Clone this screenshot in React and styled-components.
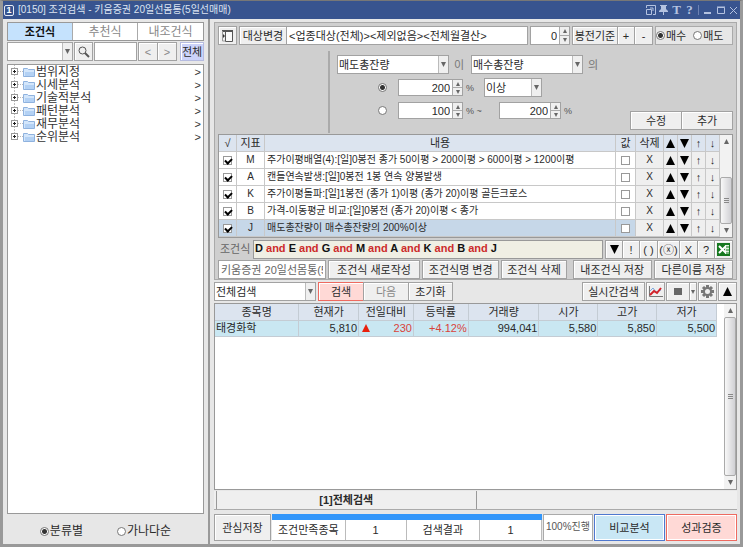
import React, { useState } from 'react'
import styled, { createGlobalStyle } from 'styled-components'

const conditions = [
  { key: 'M', text: '주가이평배열(4):[일]0봉전 종가 50이평 > 200이평 > 600이평 > 1200이평' },
  { key: 'A', text: '캔들연속발생:[일]0봉전 1봉 연속 양봉발생' },
  { key: 'K', text: '주가이평돌파:[일]1봉전 (종가 1)이평 (종가 20)이평 골든크로스' },
  { key: 'B', text: '가격-이동평균 비교:[일]0봉전 (종가 20)이평 < 종가' },
  { key: 'J', text: '매도총잔량이 매수총잔량의 200%이상' },
]
const folders = ['범위지정', '시세분석', '기술적분석', '패턴분석', '재무분석', '순위분석']
const formula = ['D', 'E', 'G', 'M', 'A', 'K', 'B', 'J']
const resultHeads = ['종목명', '현재가', '전일대비', '등락률', '거래량', '시가', '고가', '저가']
const resultWidths = [84, 60, 55, 55, 71, 59, 59, 60]

function Combo({ label, value, width }) {
  return (
    <ComboBox $width={width}>
      <select aria-label={label} defaultValue={value}>
        <option value={value}>{value}</option>
      </select>
      <ArrowCell><Tri down /></ArrowCell>
    </ComboBox>
  )
}

function Tri({ down, size = 5, color = '#666' }) {
  return (
    <svg width={size} height={size} viewBox="0 0 10 10">
      <path d={down ? 'M0 0H10L5 10Z' : 'M0 10H10L5 0Z'} fill={color} />
    </svg>
  )
}

function Spin({ label, value, width }) {
  return (
    <SpinBox $width={width}>
      <input aria-label={label} defaultValue={value} />
      <div>
        <button aria-label={label + ' 증가'}><Tri size={4} /></button>
        <button aria-label={label + ' 감소'}><Tri size={4} down /></button>
      </div>
    </SpinBox>
  )
}

function Scroll({ top, size, fill }) {
  return (
    <ScrollBar>
      <button aria-label="위로"><Tri size={5} /></button>
      <ScrollTrack $top={top}>
        <ScrollThumb $size={size} $fill={fill}><i /><i /><i /></ScrollThumb>
      </ScrollTrack>
      <button aria-label="아래로"><Tri size={5} down /></button>
    </ScrollBar>
  )
}

function Folder() {
  return (
    <svg width="12" height="10" viewBox="0 0 12 10">
      <path d="M.5 1.5H4.5L5.5 2.5H11.5V9.5H.5Z" fill="#d3e6fb" stroke="#8fb2de" />
      <path d="M2 5H11V9H2Z" fill="#b3d1f4" />
    </svg>
  )
}

function TitleBar() {
  return (
    <Title>
      <Num>1</Num>
      <h1>[0150] 조건검색 - 키움증권 20일선몸통(5일선매매)</h1>
      <TitleTools>
        <button aria-label="창 분리">
          <svg width="10" height="10" viewBox="0 0 10 10" fill="none" stroke="currentColor"><path d="M.5 3V.5H9.5V9.5H7M.5 4.5H5.5V9.5H.5ZM4 3H7V6" /></svg>
        </button>
        <button aria-label="고정">
          <svg width="9" height="10" viewBox="0 0 9 10" fill="currentColor"><path d="M1 0H8V1H7V4L9 6V7H5V10H4V7H0V6L2 4V1H1Z" /></svg>
        </button>
        <button aria-label="글꼴">T</button>
        <button aria-label="도움말">?</button>
        <Bar />
        <button aria-label="최소화">
          <svg width="9" height="10" viewBox="0 0 9 10" fill="currentColor"><path d="M1 7H8V9H1Z" /></svg>
        </button>
        <button aria-label="최대화">
          <svg width="9" height="10" viewBox="0 0 9 10" fill="none" stroke="currentColor"><path d="M1.5 2.5H8.5V8.5H1.5ZM1 2H9" /></svg>
        </button>
        <button aria-label="닫기">
          <svg width="9" height="10" viewBox="0 0 9 10" fill="none" stroke="currentColor"><path d="M1 2L8 9M8 2L1 9" /></svg>
        </button>
      </TitleTools>
    </Title>
  )
}

function Sidebar() {
  const [tab, setTab] = useState(0)
  return (
    <Side>
      <SideTabs>
        {['조건식', '추천식', '내조건식'].map((t, i) => (
          <SideTab key={t} $on={tab === i} onClick={() => setTab(i)}>{t}</SideTab>
        ))}
      </SideTabs>
      <SideTools>
        <Combo label="분류" value="" width={66} />
        <Btn $w={19} aria-label="찾기">
          <svg width="12" height="12" viewBox="0 0 12 12" fill="none" stroke="#555"><circle cx="4.5" cy="4.5" r="3.5" /><path d="M7 7L11 11" strokeWidth="2" /></svg>
        </Btn>
        <TextBox aria-label="검색어" $w={43} />
        <Joined>
          <Btn $w={20} $muted>&lt;</Btn>
          <Btn $w={20} $muted>&gt;</Btn>
        </Joined>
        <AllBtn>전체</AllBtn>
      </SideTools>
      <Tree>
        {folders.map((f, i) => (
          <li key={f}>
            <svg width="13" height="13" viewBox="0 0 13 13" fill="none">
              <path d={i === folders.length - 1 ? 'M4.5 0V6M8 6.5H13' : 'M4.5 0V13M8 6.5H13'} stroke="#bbb" strokeDasharray="1 1" />
              <rect x="1.5" y="3.5" width="6" height="6" fill="#fff" stroke="#999" />
              <path d="M3 6.5H6M4.5 5V8" stroke="#222" />
            </svg>
            <Folder />
            <span>{f}</span>
            <b>&gt;</b>
          </li>
        ))}
      </Tree>
      <SortRow>
        <Choice $big><input type="radio" name="sort" defaultChecked />분류별</Choice>
        <Choice $big><input type="radio" name="sort" />가나다순</Choice>
      </SortRow>
    </Side>
  )
}

function ConditionEditor() {
  return (
    <Group>
      <Row>
        <Btn $w={19} aria-label="패널 접기">
          <svg width="13" height="12" viewBox="0 0 13 12" fill="none" stroke="#555">
            <path d="M4.5 1.5H11.5V11.5H4.5Z" fill="#fafafa" />
            <path d="M1 1H12" strokeWidth="2" />
            <path d="M1 3L4 6L1 9Z" fill="#333" stroke="none" />
            <path d="M1.5 1V11H4" stroke="#999" />
          </svg>
        </Btn>
        <Joined $grow>
          <Btn $w={48}>대상변경</Btn>
          <TextBox aria-label="대상" $grow defaultValue="<업종대상(전체)><제외없음><전체월결산>" />
        </Joined>
        <Spin label="봉전" value="0" width={40} />
        <Joined>
          <Btn $w={46}>봉전기준</Btn>
          <Btn $w={18}>+</Btn>
          <Btn $w={19}>-</Btn>
        </Joined>
        <SideChoice>
          <Choice><input type="radio" name="side" defaultChecked />매수</Choice>
          <Choice><input type="radio" name="side" />매도</Choice>
        </SideChoice>
      </Row>
      <Detail>
        <Fields>
          <Line>
            <Combo label="왼쪽 항목" value="매도총잔량" width={112} />
            <Word>이</Word>
            <Combo label="오른쪽 항목" value="매수총잔량" width={112} />
            <Word>의</Word>
          </Line>
          <Line $indent>
            <Pick type="radio" name="range" aria-label="단일 비율" defaultChecked />
            <Spin label="비율" value="200" width={65} />
            <Percent>%</Percent>
            <Combo label="비교" value="이상" width={58} />
          </Line>
          <Line $indent>
            <Pick type="radio" name="range" aria-label="비율 범위" />
            <Spin label="최소 비율" value="100" width={65} />
            <Percent $wide>% ~</Percent>
            <Spin label="최대 비율" value="200" width={62} />
            <Percent>%</Percent>
          </Line>
        </Fields>
        <EditButtons>
          <Btn $w={52}>수정</Btn>
          <Btn $w={52}>추가</Btn>
        </EditButtons>
      </Detail>
      <ListFrame>
        <CondTable>
          <colgroup>
            <col width="18" /><col width="28" /><col /><col width="20" /><col width="28" />
            <col width="14" /><col width="14" /><col width="14" /><col width="14" />
          </colgroup>
          <thead>
            <tr>
              <th>√</th><th>지표</th><th>내용</th><th>값</th><th>삭제</th>
              <th><Tri size={9} color="#000" /></th><th><Tri size={9} color="#000" down /></th><th>↑</th><th>↓</th>
            </tr>
          </thead>
          <tbody>
            {conditions.map((c, i) => (
              <CondRow key={c.key} $on={i === 4}>
                <td><Check type="checkbox" aria-label={c.key + ' 사용'} defaultChecked /></td>
                <td>{c.key}</td>
                <td>{c.text}</td>
                <td><Check type="checkbox" aria-label={c.key + ' 값'} /></td>
                <td><button>X</button></td>
                <td><button aria-label="맨 위로"><Tri size={9} color="#000" /></button></td>
                <td><button aria-label="맨 아래로"><Tri size={9} color="#000" down /></button></td>
                <td><button>↑</button></td>
                <td><button>↓</button></td>
              </CondRow>
            ))}
          </tbody>
        </CondTable>
        <Scroll top={29} size={47} />
      </ListFrame>
      <Row>
        <FormulaLabel>조건식</FormulaLabel>
        <Formula>
          {formula.map((f, i) => (
            <React.Fragment key={f}>{i > 0 && <em> and </em>}{f}</React.Fragment>
          ))}
        </Formula>
        <Joined>
          <Btn $w={18} aria-label="펼치기"><Tri size={9} color="#000" down /></Btn>
          <Btn $w={18}>!</Btn>
          <Btn $w={19}>( )</Btn>
          <Btn $w={23}>(ⓧ)</Btn>
          <Btn $w={19}>X</Btn>
          <Btn $w={18}>?</Btn>
          <Btn $w={19} aria-label="엑셀">
            <svg width="13" height="13" viewBox="0 0 13 13"><path d="M0 0H13V13H0Z" fill="#16781f" /><path d="M8 2H12V11H8Z" fill="#dcefdc" /><path d="M2 3L9 10M9 3L2 10" stroke="#fff" strokeWidth="2" /><path d="M9 4H12M9 7H12M9 10H12" stroke="#16781f" /></svg>
          </Btn>
        </Joined>
      </Row>
      <Row>
        <TextBox aria-label="조건식명" $w={108} $muted defaultValue="키움증권 20일선몸통(5일선매매)" />
        <Btn $grow={93}>조건식 새로작성</Btn>
        <Btn $grow={78}>조건식명 변경</Btn>
        <Btn $grow={66}>조건식 삭제</Btn>
        <Gap />
        <Btn $grow={80}>내조건식 저장</Btn>
        <Btn $grow={80}>다른이름 저장</Btn>
      </Row>
    </Group>
  )
}

function Results() {
  return (
    <>
      <Row>
        <Combo label="검색 범위" value="전체검색" width={102} />
        <Joined>
          <Btn $w={46} $red>검색</Btn>
          <Btn $w={46} $muted>다음</Btn>
          <Btn $w={45}>초기화</Btn>
        </Joined>
        <ResultTools>
          <Btn $w={63}>실시간검색</Btn>
          <Btn $w={19} aria-label="차트">
            <svg width="15" height="13" viewBox="0 0 15 13" fill="none"><path d="M1.5 1V11.5H15" stroke="#777" /><path d="M2 6L5 3L8 7L13 5" stroke="#7aa8df" /><path d="M2 10L6 6L9 8L13 3" stroke="#d3222a" strokeWidth="2" /></svg>
          </Btn>
          <Joined>
            <Btn $w={24} aria-label="정지"><Stop /></Btn>
            <Btn $w={8} aria-label="정지 메뉴"><Tri size={4} down /></Btn>
          </Joined>
          <Btn $w={19} aria-label="설정">
            <svg width="13" height="13" viewBox="0 0 13 13" fill="none" stroke="#777"><circle cx="6.5" cy="6.5" r="3.5" strokeWidth="2" /><path d="M6.5 0V3M6.5 10V13M0 6.5H3M10 6.5H13M2 2L4 4M9 9L11 11M11 2L9 4M4 9L2 11" strokeWidth="3" /></svg>
          </Btn>
          <Btn $w={19} aria-label="접기"><Tri size={9} color="#000" /></Btn>
        </ResultTools>
      </Row>
      <ResultFrame>
        <ResultArea>
          <ResultTable>
            <colgroup>
              {resultWidths.map((w, i) => <col key={i} style={{ width: `${w / 5.03}%` }} />)}
            </colgroup>
            <thead>
              <tr>{resultHeads.map((h) => <th key={h}>{h}</th>)}</tr>
            </thead>
            <tbody>
              <tr>
                <td>태경화학</td>
                <td>5,810</td>
                <td><Change><Tri size={8} color="#e8200c" />230</Change></td>
                <Up>+4.12%</Up>
                <td>994,041</td>
                <td>5,580</td>
                <td>5,850</td>
                <td>5,500</td>
              </tr>
            </tbody>
          </ResultTable>
        </ResultArea>
        <Scroll fill />
      </ResultFrame>
      <PageTabs>
        <button>[1]전체검색</button>
      </PageTabs>
      <Bottom>
        <Btn $w={57}>관심저장</Btn>
        <Status>
          <span>조건만족종목</span>
          <span>1</span>
          <span>검색결과</span>
          <span>1</span>
        </Status>
        <Progress>100%진행</Progress>
        <BigBtn>비교분석</BigBtn>
        <BigBtn $red>성과검증</BigBtn>
      </Bottom>
    </>
  )
}

export default function App() {
  return (
    <>
      <Global />
      <Window>
        <TitleBar />
        <Body>
          <Sidebar />
          <Main>
            <ConditionEditor />
            <Results />
          </Main>
        </Body>
      </Window>
    </>
  )
}

const Global = createGlobalStyle`
* {
  box-sizing: border-box;
}
body {
  margin: 0;
  background: #999;
}
body, button, input, select {
  font-family: "Liberation Sans", "Noto Sans CJK KR", sans-serif;
  font-size: 11px;
  line-height: 14px;
  color: #2a2a2a;
}
button, input, select {
  margin: 0;
  padding: 0;
  border: 0;
  border-radius: 0;
  background: none;
  outline: none;
}
svg {
  display: block;
  flex: none;
}
input[type=radio] {
  appearance: none;
  flex: none;
  width: 9px;
  height: 9px;
  border: 1px solid #777;
  border-radius: 50%;
  background: #fff;
  &:checked {
    background: radial-gradient(#333 0 2px, #fff 3px);
  }
}
`;

const Window = styled.div`
  display: flex;
  flex-direction: column;
  min-height: 100vh;
  border: 3px solid #999;
  border-top: 1px solid #777;
  background: #e7e7e7;
`;

const Title = styled.header`
  display: flex;
  align-items: center;
  gap: 4px;
  height: 18px;
  padding: 0 2px 0 1px;
  background: #38548f;
  h1 {
    flex: 1;
    margin: 0;
    font-size: 10px;
    font-weight: normal;
    color: #dde4f2;
    white-space: nowrap;
  }
`;

const Num = styled.span`
  width: 10px;
  border: 1px solid #e6ebf5;
  border-radius: 2px;
  font-size: 9px;
  line-height: 9px;
  font-weight: bold;
  text-align: center;
  color: #fff;
`;

const TitleTools = styled.div`
  display: flex;
  align-items: center;
  gap: 4px;
  button {
    display: flex;
    justify-content: center;
    width: 9px;
    color: #b4c2e0;
    font-family: "Liberation Serif", serif;
    font-size: 13px;
    font-weight: bold;
  }
`;

const Bar = styled.i`
  width: 1px;
  height: 10px;
  background: #6d82b3;
`;

const Body = styled.div`
  display: flex;
  flex: 1;
`;

const Side = styled.aside`
  display: flex;
  flex-direction: column;
  flex: none;
  width: 207px;
  padding: 3px 4px 0;
  border-right: 2px solid #999;
`;

const SideTabs = styled.div`
  display: grid;
  grid-template-columns: 1fr 1fr 1fr;
  height: 19px;
  border: 1px solid #999;
  background: #fff;
`;

const SideTab = styled.button`
  border-right: 1px solid #aaa;
  font-size: ${p => p.$on ? '11px' : '12px'};
  font-weight: ${p => p.$on ? 'bold' : 'normal'};
  color: ${p => p.$on ? '#111' : '#888'};
  background: ${p => p.$on ? '#c5e2fd' : '#fff'};
  &:last-child {
    border-right: 0;
  }
`;

const SideTools = styled.div`
  display: flex;
  gap: 1px;
  height: 19px;
  margin: 1px 0 3px;
`;

const Joined = styled.div`
  display: flex;
  flex: ${p => p.$grow ? '1' : 'none'};
  min-width: 0;
  > * + * {
    margin-left: -1px;
  }
`;

const Btn = styled.button`
  display: flex;
  align-items: center;
  justify-content: center;
  flex: ${p => p.$grow ? `${p.$grow} 1 ${p.$grow}px` : 'none'};
  width: ${p => p.$w ? p.$w + 'px' : 'auto'};
  min-height: 19px;
  border: 1px solid ${p => p.$red ? '#ee6a60' : '#a2a2a2'};
  box-shadow: inset 1px 1px 0 #fff;
  background: ${p => p.$red ? '#ffd9d6' : '#efefef'};
  color: ${p => p.$muted ? '#888' : '#2a2a2a'};
  white-space: nowrap;
`;

const AllBtn = styled(Btn)`
  flex: 1;
  margin-left: 2px;
  border-color: #b5bbe0;
  background: #ccd3fa;
`;

const TextBox = styled.input`
  flex: ${p => p.$grow ? '1' : 'none'};
  width: ${p => p.$w ? p.$w + 'px' : 'auto'};
  min-width: 0;
  padding: 0 2px;
  border: 1px solid #a2a2a2;
  background: #fff;
  color: ${p => p.$muted ? '#666' : '#2a2a2a'};
`;

const ComboBox = styled.div`
  display: flex;
  flex: none;
  width: ${p => p.$width}px;
  height: 19px;
  border: 1px solid #a2a2a2;
  background: #fff;
  select {
    appearance: none;
    flex: 1;
    min-width: 0;
    padding-left: 1px;
  }
`;

const ArrowCell = styled.span`
  display: flex;
  align-items: center;
  justify-content: center;
  width: 10px;
  border-left: 1px solid #bbb;
  background: #efefef;
  pointer-events: none;
`;

const SpinBox = styled.div`
  display: flex;
  flex: none;
  width: ${p => p.$width}px;
  height: 17px;
  border: 1px solid #a2a2a2;
  background: #fff;
  input {
    flex: 1;
    min-width: 0;
    padding-right: 2px;
    text-align: right;
  }
  div {
    display: flex;
    flex-direction: column;
    width: 10px;
    border-left: 1px solid #aaa;
  }
  button {
    display: flex;
    align-items: center;
    justify-content: center;
    flex: 1;
    background: #efefef;
  }
  button + button {
    border-top: 1px solid #aaa;
  }
`;

const Tree = styled.ul`
  flex: 1;
  margin: 0;
  padding: 0 2px;
  border: 1px solid #999;
  background: #fff;
  list-style: none;
  font-size: 12px;
  li {
    display: flex;
    align-items: center;
    height: 13px;
    color: #333;
  }
  span {
    flex: 1;
    padding-left: 1px;
  }
  b {
    font-weight: normal;
    font-size: 11px;
  }
`;

const SortRow = styled.div`
  display: flex;
  justify-content: center;
  gap: 34px;
  padding: 10px 0 6px;
`;

const Choice = styled.label`
  display: flex;
  align-items: center;
  gap: 1px;
  font-size: ${p => p.$big ? '12px' : '11px'};
  white-space: nowrap;
`;

const Main = styled.main`
  display: flex;
  flex-direction: column;
  flex: 1;
  min-width: 0;
  gap: 2px;
  padding: 3px 3px 3px 4px;
`;

const Group = styled.section`
  display: flex;
  flex-direction: column;
  gap: 1px;
  padding: 3px 3px 0;
  border: 1px solid #aaa;
  background: #cfcfcf;
`;

const Row = styled.div`
  display: flex;
  gap: 2px;
  height: 19px;
  > ${SpinBox} {
    height: 19px;
  }
`;

const SideChoice = styled.div`
  display: flex;
  gap: 7px;
  width: 78px;
  border: 1px solid #aaa;
  background: #e7e7e7;
`;

const Detail = styled.div`
  display: flex;
  justify-content: space-between;
  padding: 5px 0 0 110px;
`;

const Fields = styled.div`
  display: flex;
  flex-direction: column;
  gap: 4px;
  padding: 4px 0 13px 7px;
  border-left: 2px solid #aaa;
`;

const EditButtons = styled(Joined)`
  align-items: flex-end;
  padding-bottom: 3px;
`;

const Line = styled.div`
  display: flex;
  align-items: center;
  height: 19px;
  padding-left: ${p => p.$indent ? '41px' : '0'};
`;

const Word = styled.span`
  width: 22px;
  padding-left: 5px;
  color: #777;
`;

const Pick = styled.input`
  && {
    margin-right: 11px;
  }
`;

const Percent = styled.span`
  width: ${p => p.$wide ? '36px' : '21px'};
  padding-left: 3px;
  font-size: 9px;
  color: #555;
`;

const ListFrame = styled.div`
  display: flex;
  margin-bottom: 1px;
  border: 1px solid #999;
`;

const CondTable = styled.table`
  flex: 1;
  width: 0;
  table-layout: fixed;
  border-collapse: separate;
  border-spacing: 0;
  th, td {
    height: 17px;
    padding: 0;
    border-right: 1px solid #c8c8c8;
    border-bottom: 1px solid #c8c8c8;
    font-size: 11px;
    font-weight: normal;
    line-height: 14px;
    text-align: center;
    white-space: nowrap;
  }
  th {
    background: #dce4ef;
  }
  svg, input {
    margin: 0 auto;
  }
  td button {
    display: block;
    width: 100%;
  }
`;

const CondRow = styled.tr`
  background: ${p => p.$on ? '#c6d7e8' : '#fff'};
  td:nth-child(2) {
    font-size: 10px;
  }
  td:nth-child(3) {
    padding-left: 2px;
    font-size: 10px;
    text-align: left;
  }
  td:nth-child(n+5) {
    background: #efefef;
  }
  td:nth-child(5) button {
    font-size: 10px;
  }
`;

const Check = styled.input`
  appearance: none;
  display: block;
  width: 9px;
  height: 9px;
  border: 1px solid #999;
  background: #fff;
  &:checked::after {
    content: '';
    display: block;
    width: 5px;
    height: 3px;
    margin: 1px;
    border: solid #000;
    border-width: 0 0 2px 2px;
    transform: rotate(-45deg);
  }
`;

const ScrollBar = styled.div`
  display: flex;
  flex-direction: column;
  flex: none;
  width: 12px;
  background: #f2f2f2;
  > button {
    display: flex;
    align-items: center;
    justify-content: center;
    height: 13px;
  }
`;

const ScrollTrack = styled.div`
  display: flex;
  flex-direction: column;
  flex: 1;
  padding-top: ${p => p.$top || 0}px;
`;

const ScrollThumb = styled.div`
  display: flex;
  flex-direction: column;
  align-items: center;
  justify-content: center;
  gap: 1px;
  flex: ${p => p.$fill ? '1' : 'none'};
  height: ${p => p.$fill ? 'auto' : p.$size + 'px'};
  border: 1px solid #aaa;
  border-radius: 2px;
  background: linear-gradient(90deg, #f8f8f8, #d0d0d4);
  i {
    width: 5px;
    height: 1px;
    background: #888;
  }
`;

const FormulaLabel = styled.span`
  width: 33px;
  padding: 2px 0 0 2px;
  color: #666;
`;

const Formula = styled.div`
  flex: 1;
  padding: 0 1px;
  border: 1px solid #999;
  background: #f0efe4;
  font-weight: bold;
  white-space: pre;
  color: #111;
  em {
    font-style: normal;
    color: #cc2b2b;
  }
`;

const Gap = styled.span`
  width: 2px;
`;

const ResultTools = styled.div`
  display: flex;
  flex: 1;
  justify-content: flex-end;
  gap: 1px;
`;

const Stop = styled.i`
  width: 8px;
  height: 7px;
  background: #666;
`;

const ResultFrame = styled.div`
  display: flex;
  flex: 1;
  border: 1px solid #999;
  background: #fff;
`;

const ResultArea = styled.div`
  flex: 1;
  padding-right: 7px;
`;

const ResultTable = styled.table`
  width: 100%;
  table-layout: fixed;
  border-collapse: collapse;
  th, td {
    height: 16px;
    padding: 0 1px;
    border-right: 1px solid #c4ccd4;
    border-bottom: 1px solid #c4ccd4;
    font-size: 11px;
    font-weight: normal;
    line-height: 14px;
    white-space: nowrap;
  }
  th {
    background: #dce4ef;
  }
  td {
    background: #c9e7f2;
    text-align: right;
  }
  td:first-child {
    text-align: left;
  }
`;

const Change = styled.span`
  display: flex;
  align-items: center;
  justify-content: space-between;
  padding-left: 2px;
  color: #d9433a;
`;

const Up = styled.td`
  color: #d9433a;
`;

const PageTabs = styled.div`
  display: flex;
  height: 19px;
  margin-top: -1px;
  padding-left: 2px;
  border-bottom: 1px solid #aaa;
  background: #efefef;
  button {
    width: 50%;
    border: solid #999;
    border-width: 0 1px;
    font-weight: bold;
  }
`;

const Bottom = styled.footer`
  display: flex;
  gap: 1px;
  height: 27px;
  margin-top: 2px;
`;

const Status = styled.div`
  display: grid;
  grid-template-columns: 74fr 61fr 74fr 62fr;
  flex: 1;
  border-top: 6px solid #3296fa;
  border-bottom: 1px solid #aaa;
  background: #fff;
  span {
    display: flex;
    align-items: center;
    justify-content: center;
    border-right: 1px solid #bbb;
    white-space: nowrap;
  }
`;

const Progress = styled.div`
  width: 50px;
  padding: 5px 2px;
  border: 1px solid #aaa;
  background: #fff;
  font-size: 10px;
  white-space: nowrap;
  color: #555;
`;

const BigBtn = styled(Btn)`
  width: 71px;
  border-color: ${p => p.$red ? '#ee6a60' : '#4f78cf'};
  box-shadow: inset 0 0 0 1px #fff;
  background: ${p => p.$red ? '#ffd9d6' : '#c9e7f5'};
`;
